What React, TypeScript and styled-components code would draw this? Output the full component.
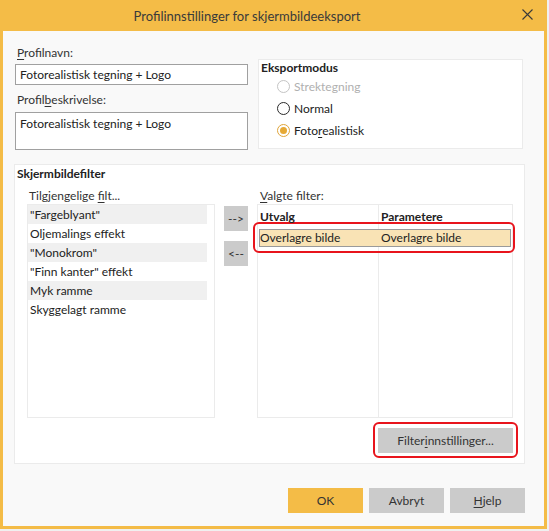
import React from 'react';
import styled, { createGlobalStyle } from 'styled-components';

const GlobalStyle = createGlobalStyle`
  html, body {
    margin: 0;
    padding: 0;
    background: #f0f0f0;
  }
  body {
    font-family: Lato, 'Noto Sans', 'Liberation Sans', sans-serif;
    font-size: 12px;
    color: #222;
  }
  u {
    text-decoration-thickness: 1px;
    text-underline-offset: 2px;
  }
`;

const accent = '#f4bc47';

const Window = styled.div`
  width: 547px;
  height: 529px;
  box-sizing: border-box;
  display: flex;
  flex-direction: column;
  background: #f9f9f9;
  border: 3px solid ${accent};
  border-top: none;
`;

const TitleBar = styled.div`
  height: 31px;
  margin: 0 -3px;
  background: ${accent};
  display: flex;
  align-items: center;
  position: relative;
`;

const Title = styled.div`
  flex: 1;
  text-align: center;
  padding-right: 53px;
  font-size: 13px;
  color: #3a3a3a;
`;

const CloseButton = styled.button`
  position: absolute;
  right: 13px;
  top: 8px;
  width: 13px;
  height: 13px;
  padding: 0;
  border: none;
  background: transparent;
  display: flex;
`;

const Body = styled.div`
  flex: 1;
  display: flex;
  flex-direction: column;
  padding: 14px 19px 0 11px;
`;

const TopRow = styled.div`
  display: flex;
  gap: 10px;
  padding-left: 1px;
`;

const FieldColumn = styled.div`
  width: 233px;
  display: flex;
  flex-direction: column;
`;

const Label = styled.label<{ $indent?: number; $gap?: number }>`
  display: block;
  height: 16px;
  line-height: 16px;
  padding-left: ${p => p.$indent ?? 2}px;
  margin-bottom: ${p => p.$gap ?? 3}px;
  color: #333;
`;

const TextInput = styled.div<{ $tall?: boolean }>`
  box-sizing: border-box;
  height: ${p => (p.$tall ? 38 : 21)}px;
  border: 1px solid #a0a0a0;
  background: #fff;
  padding: ${p => (p.$tall ? '3px 4px' : '0 4px')};
  line-height: ${p => (p.$tall ? '16px' : '19px')};
  margin-bottom: ${p => (p.$tall ? 0 : 7)}px;
`;

const GroupBox = styled.div`
  box-sizing: border-box;
  background: #fff;
  border: 1px solid #ebebeb;
`;

const ModeGroup = styled(GroupBox)`
  margin-top: 14px;
  width: 265px;
  height: 90px;
  padding: 0 2px;
`;

const GroupTitle = styled.div<{ $height?: number }>`
  font-weight: 700;
  height: ${p => p.$height ?? 17}px;
  line-height: ${p => p.$height ?? 17}px;
`;

const RadioList = styled.div`
  display: flex;
  flex-direction: column;
  margin-top: -1px;
  padding-left: 16px;
`;

const RadioRow = styled.div<{ $disabled?: boolean }>`
  display: flex;
  align-items: center;
  gap: 4px;
  height: 22px;
  color: ${p => (p.$disabled ? '#b0b0b0' : '#222')};
`;

const RadioCircle = styled.span<{ $checked?: boolean; $disabled?: boolean }>`
  box-sizing: border-box;
  width: 13px;
  height: 13px;
  border-radius: 50%;
  border: 1px solid
    ${p => (p.$disabled ? '#c4c4c4' : p.$checked ? '#e0a53a' : '#2a2a2a')};
  display: flex;
  align-items: center;
  justify-content: center;
  &::after {
    content: '';
    width: 7px;
    height: 7px;
    border-radius: 50%;
    background: ${p => (p.$checked ? '#e6a935' : 'transparent')};
  }
`;

const FilterGroup = styled(GroupBox)`
  margin-top: 14px;
  height: 300px;
  padding: 0 11px 0 2px;
  display: flex;
  flex-direction: column;
`;

const FilterColumns = styled.div`
  display: flex;
  margin-top: 6px;
  padding-left: 10px;
`;

const ListColumn = styled.div<{ $width: number }>`
  width: ${p => p.$width}px;
  display: flex;
  flex-direction: column;
`;

const ListBox = styled.div`
  box-sizing: border-box;
  height: 214px;
  border: 1px solid #ebebeb;
  background: #fff;
`;

const ListItem = styled.div<{ $shaded: boolean }>`
  box-sizing: border-box;
  width: 179px;
  height: 19px;
  line-height: 19px;
  padding-left: 2px;
  background: ${p => (p.$shaded ? '#f0f0f0' : '#fff')};
`;

const MoveButtons = styled.div`
  width: 24px;
  margin: 18px 9px 0;
  display: flex;
  flex-direction: column;
  gap: 10px;
`;

const MoveButton = styled.button`
  width: 24px;
  height: 25px;
  padding: 0;
  border: none;
  background: #cbcbcb;
  font: inherit;
  color: #333;
`;

const Table = styled.div`
  box-sizing: border-box;
  height: 214px;
  border: 1px solid #ebebeb;
  background: #fff;
  display: flex;
  flex-direction: column;
  position: relative;
`;

const ColumnRule = styled.div`
  position: absolute;
  left: 120px;
  top: 0;
  bottom: 0;
  width: 1px;
  background: #ebebeb;
`;

const TableRow = styled.div<{ $header?: boolean; $selected?: boolean }>`
  display: grid;
  grid-template-columns: 121px 1fr;
  box-sizing: border-box;
  height: ${p => (p.$header ? 24 : 18)}px;
  line-height: ${p => (p.$header ? 23 : 16)}px;
  font-weight: ${p => (p.$header ? 700 : 400)};
  margin: ${p => (p.$selected ? '0 1px' : '0')};
  background: ${p => (p.$selected ? '#f9e3b5' : 'transparent')};
  border: ${p => (p.$selected ? '1px solid #9a9a9a' : 'none')};
  position: relative;
  z-index: 1;
  & > span {
    padding-left: ${p => (p.$selected ? 0 : 2)}px;
  }
`;

const Highlight = styled.div<{ $inset: string }>`
  position: absolute;
  inset: ${p => p.$inset};
  border: 2px solid #e8141c;
  border-radius: 6px;
  pointer-events: none;
`;

const FilterFooter = styled.div`
  display: flex;
  justify-content: flex-end;
  margin-top: 10px;
`;

const Anchor = styled.div`
  position: relative;
`;

const GrayButton = styled.button<{ $width?: number; $primary?: boolean }>`
  width: ${p => p.$width ?? 75}px;
  height: 25px;
  padding: 0;
  border: none;
  background: ${p => (p.$primary ? accent : '#cbcbcb')};
  font: inherit;
  color: #333;
`;

const DialogButtons = styled.div`
  display: flex;
  justify-content: flex-end;
  gap: 6px;
  margin-top: 24px;
`;

const filters = [
  '"Fargeblyant"',
  'Oljemalings effekt',
  '"Monokrom"',
  '"Finn kanter" effekt',
  'Myk ramme',
  'Skyggelagt ramme',
];

const App = (): JSX.Element => {
  return (
    <>
      <GlobalStyle />
      <Window>
        <TitleBar>
          <Title>Profilinnstillinger for skjermbildeeksport</Title>
          <CloseButton aria-label="Lukk">
            <svg width="13" height="13" viewBox="0 0 13 13">
              <path d="M1.5 1.5 L11.5 11.5 M11.5 1.5 L1.5 11.5" stroke="#3a3a3a" strokeWidth="1.1" />
            </svg>
          </CloseButton>
        </TitleBar>
        <Body>
          <TopRow>
            <FieldColumn>
              <Label>
                <u>P</u>rofilnavn:
              </Label>
              <TextInput>Fotorealistisk tegning + Logo</TextInput>
              <Label $gap={4}>
                Profil<u>b</u>eskrivelse:
              </Label>
              <TextInput $tall>Fotorealistisk tegning + Logo</TextInput>
            </FieldColumn>
            <ModeGroup>
              <GroupTitle $height={16}>Eksportmodus</GroupTitle>
              <RadioList>
                <RadioRow $disabled>
                  <RadioCircle $disabled />
                  Strektegning
                </RadioRow>
                <RadioRow>
                  <RadioCircle />
                  Normal
                </RadioRow>
                <RadioRow>
                  <RadioCircle $checked />
                  <span>
                    Foto<u>r</u>ealistisk
                  </span>
                </RadioRow>
              </RadioList>
            </ModeGroup>
          </TopRow>

          <FilterGroup>
            <GroupTitle>Skjermbildefilter</GroupTitle>
            <FilterColumns>
              <ListColumn $width={188}>
                <Label $gap={0}>
                  Tilgjengelige <u>f</u>ilt...
                </Label>
                <ListBox>
                  {filters.map((f, i) => (
                    <ListItem key={f} $shaded={i % 2 === 0}>
                      {f}
                    </ListItem>
                  ))}
                </ListBox>
              </ListColumn>
              <MoveButtons>
                <MoveButton>--&gt;</MoveButton>
                <MoveButton>&lt;--</MoveButton>
              </MoveButtons>
              <ListColumn $width={256}>
                <Label $indent={3} $gap={0}>
                  <u>V</u>algte filter:
                </Label>
                <Table>
                  <ColumnRule />
                  <TableRow $header>
                    <span>Utvalg</span>
                    <span>Parametere</span>
                  </TableRow>
                  <Anchor>
                    <TableRow $selected>
                      <span>Overlagre bilde</span>
                      <span>Overlagre bilde</span>
                    </TableRow>
                    <Highlight $inset="-7px -3px -6px -5px" />
                  </Anchor>
                </Table>
              </ListColumn>
            </FilterColumns>
            <FilterFooter>
              <Anchor>
                <GrayButton $width={135}>
                  Filter<u>i</u>nnstillinger...
                </GrayButton>
                <Highlight $inset="-6px -5px -5px -5px" />
              </Anchor>
            </FilterFooter>
          </FilterGroup>

          <DialogButtons>
            <GrayButton $primary>OK</GrayButton>
            <GrayButton>Avbryt</GrayButton>
            <GrayButton>
              <u>H</u>jelp
            </GrayButton>
          </DialogButtons>
        </Body>
      </Window>
    </>
  );
};

export default App;
